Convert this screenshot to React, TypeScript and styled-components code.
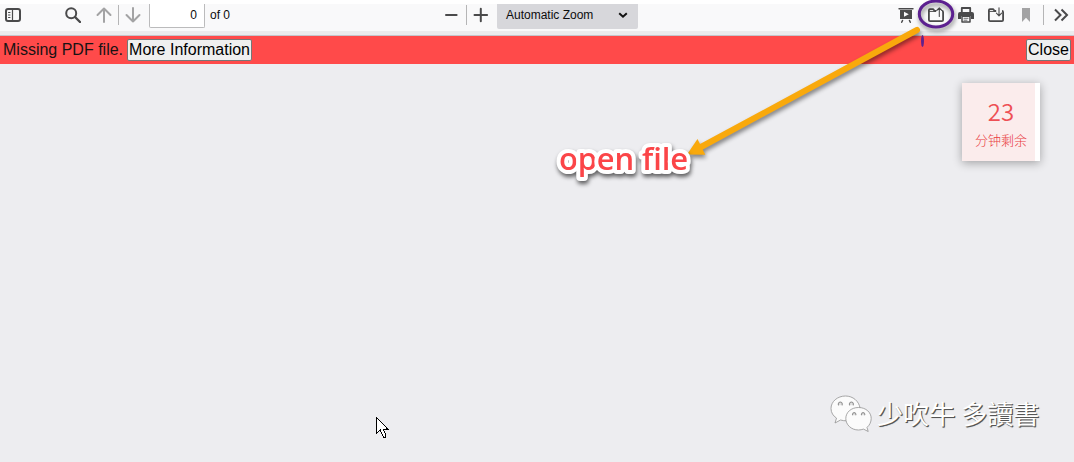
import { ReactNode } from 'react';
import styled, { createGlobalStyle } from 'styled-components';

const GlobalStyle = createGlobalStyle`
  body {
    margin: 0;
    font-family: 'Liberation Sans', Arial, sans-serif;
  }
`;

const Viewer = styled.div`
  position: relative;
  display: flex;
  flex-direction: column;
  width: 1074px;
  height: 462px;
  overflow: hidden;
  background-color: #ededf0;
`;

const Toolbar = styled.header`
  display: flex;
  box-sizing: border-box;
  height: 31px;
  flex-shrink: 0;
  border-top: 4px solid #fff;
  background-color: #f9f9fa;
`;

const ToolbarGroup = styled.div<{ $width: number; $start?: number }>`
  display: flex;
  align-items: flex-start;
  box-sizing: border-box;
  width: ${(props) => props.$width}px;
  padding-left: ${(props) => props.$start ?? 0}px;
`;

const ToolButton = styled.button<{ $width?: number; $gap?: number; $faded?: boolean }>`
  display: flex;
  align-items: center;
  justify-content: center;
  flex-shrink: 0;
  width: ${(props) => props.$width ?? 30}px;
  height: 22px;
  margin: 0 0 0 ${(props) => props.$gap ?? 0}px;
  padding: 0;
  border: none;
  background: none;
  color: ${(props) => (props.$faded ? '#a3a3a4' : '#4a4a4b')};
`;

const Separator = styled.span<{ $gap?: number }>`
  flex-shrink: 0;
  width: 1px;
  height: 20px;
  margin-top: 1px;
  margin-left: ${(props) => props.$gap ?? 0}px;
  background-color: #b5b5b6;
`;

const PageInput = styled.input`
  box-sizing: border-box;
  width: 56px;
  height: 24px;
  margin: 0 0 0 2px;
  padding: 0 7px 2px 0;
  border: 1px solid #bbbbbc;
  border-top: none;
  border-radius: 0 0 2px 2px;
  background-color: #fff;
  color: #0c0c0d;
  font: 12px/20px 'Liberation Sans', Arial, sans-serif;
  text-align: right;
  outline: none;
`;

const PageCount = styled.span`
  margin-left: 5px;
  color: #0c0c0d;
  font-size: 12px;
  line-height: 22px;
`;

const ScaleSelect = styled.button`
  display: flex;
  align-items: center;
  justify-content: space-between;
  box-sizing: border-box;
  width: 141px;
  height: 25px;
  margin: 0 0 0 2px;
  padding: 0 10px 3px 9px;
  border: none;
  border-radius: 0 0 2px 2px;
  background-color: #d7d7db;
  color: #0c0c0d;
  font: 12px 'Liberation Sans', Arial, sans-serif;
`;

const ToolbarEdge = styled.div`
  box-sizing: border-box;
  height: 5px;
  flex-shrink: 0;
  border-bottom: 1px solid #c5c5cb;
  background-color: #ebebed;
`;

const ErrorBar = styled.div`
  display: flex;
  align-items: center;
  justify-content: space-between;
  box-sizing: border-box;
  height: 28px;
  flex-shrink: 0;
  padding: 0 3px;
  background-color: #ff4a4a;
  color: #171314;
  font-size: 16px;
`;

const ErrorMessage = styled.div`
  display: flex;
  align-items: center;
  gap: 4px;
`;

const ErrorButton = styled.button<{ $width: number }>`
  box-sizing: border-box;
  width: ${(props) => props.$width}px;
  height: 22px;
  padding: 0;
  border: 1px solid #767676;
  border-radius: 2px;
  background-color: #efefef;
  color: #000;
  font: 16px/18px 'Liberation Sans', Arial, sans-serif;
  white-space: nowrap;
`;

const Annotations = styled.svg`
  position: absolute;
  inset: 0;
`;

const Shadowed = styled.g`
  filter: drop-shadow(1px 3px 2px rgba(0, 0, 0, 0.45));
`;

const Callout = styled.text`
  fill: #fb4548;
  stroke: #fff;
  stroke-width: 8px;
  stroke-linejoin: round;
  paint-order: stroke fill;
  font: 600 31px 'Open Sans', 'Noto Sans', sans-serif;
  filter: drop-shadow(1px 3px 2px rgba(0, 0, 0, 0.6));
`;

const Timer = styled.div`
  position: absolute;
  left: 962px;
  top: 83px;
  display: flex;
  flex-direction: column;
  align-items: center;
  box-sizing: border-box;
  width: 78px;
  height: 78px;
  padding-top: 10px;
  background: linear-gradient(to right, #fbecec 73px, #fff 73px);
  box-shadow: 0 2px 9px rgba(0, 0, 0, 0.32);
  color: #ee5055;
  font-family: 'Noto Sans CJK SC', sans-serif;
`;

const TimerValue = styled.span`
  font-size: 24px;
  font-weight: 350;
  line-height: 35px;
`;

const TimerLabel = styled.span`
  color: #ea3c42;
  font-size: 13px;
  font-weight: 300;
  line-height: 23px;
`;

const Watermark = styled.div`
  position: absolute;
  left: 829px;
  top: 392px;
  display: flex;
  align-items: center;
  gap: 4px;
  color: #fff;
  font: 400 26.1px/42px 'Noto Sans CJK TC', sans-serif;
  white-space: nowrap;
  text-shadow: 1px 1px 0 #555, 1px 1px 1px #777;
`;

const Cursor = styled.svg`
  position: absolute;
  left: 376px;
  top: 417px;
`;

function Icon({ children }: { children: ReactNode }) {
  return (
    <svg width="16" height="16" viewBox="0 0 16 16" fill="none" stroke="currentColor" strokeWidth="2" strokeLinecap="round" strokeLinejoin="round">
      {children}
    </svg>
  );
}

function FolderOutline() {
  return (
    <>
      <path d="M8.2 4H6.6L5.3 2.2H2Q.9 2.2.9 3.3v9.6q0 1.2 1.2 1.2h11.8q1.2 0 1.2-1.2V5.2Q15.1 4 14 4" strokeWidth="1.8" strokeLinecap="butt" />
      <path d="M1.5 4.4H7" strokeWidth="1" />
    </>
  );
}

function WeChatLogo() {
  return (
    <svg width="44" height="40" viewBox="0 0 44 40" fill="#fbfbfb" stroke="#929292" strokeWidth="0.8">
      <path d="M16.5 3C8.5 3 2 8.5 2 15.5c0 4.2 2.2 7.4 5.5 9.6L6 30l5.5-3c2 .6 4.3.9 6.5.8C28 27 31 22 31 15 30 8.3 24 3 16.5 3Z" />
      <path d="M29.5 14.5c-7.5 0-12.7 5-12.7 11S22 37 29.5 37c1.8 0 3.5-.4 5-.9l4.7 2.4-1.2-4.1c2.6-2.2 4.2-5.4 4.2-9 0-5.9-5.2-10.9-12.7-10.9Z" />
      <path d="M9.7 12.3a2 2 0 1 1 3.2 0M20.8 12.3a2 2 0 1 1 3.2 0M23.8 22.3a1.7 1.7 0 1 1 2.8 0M32.7 22.3a1.7 1.7 0 1 1 2.8 0" fill="#e2e2e2" strokeWidth="1.1" />
    </svg>
  );
}

function App() {
  return (
    <Viewer>
      <GlobalStyle />
      <Toolbar>
        <ToolbarGroup $width={436}>
          <ToolButton $width={26} aria-label="Toggle sidebar">
            <Icon>
              <rect x="1" y="2" width="14" height="12" rx="2" />
              <path d="M7.5 3v10" strokeWidth="1.2" />
              <path d="M3.5 5.5H5M3.5 8H5M3.5 10.5H5" strokeWidth="1" />
            </Icon>
          </ToolButton>
          <ToolButton $gap={32} aria-label="Find">
            <Icon>
              <circle cx="6.2" cy="6.2" r="5" />
              <path d="m10 10 5 5" strokeWidth="2.4" />
            </Icon>
          </ToolButton>
          <ToolButton $gap={1} $faded aria-label="Previous page">
            <Icon>
              <path d="M8 15V1.5M1.5 8 8 1.5 14.5 8" />
            </Icon>
          </ToolButton>
          <Separator $gap={-1} />
          <ToolButton $width={28} $faded aria-label="Next page">
            <Icon>
              <path d="M8 1v13.5M1.5 8 8 14.5 14.5 8" />
            </Icon>
          </ToolButton>
          <PageInput aria-label="Page" defaultValue="0" />
          <PageCount>of 0</PageCount>
        </ToolbarGroup>
        <ToolbarGroup $width={454}>
          <ToolButton aria-label="Zoom out">
            <Icon>
              <path d="M3 8h10.6" />
            </Icon>
          </ToolButton>
          <Separator />
          <ToolButton $width={28} aria-label="Zoom in">
            <Icon>
              <path d="M1.5 8h12.6M7.8 1.7v12.6" />
            </Icon>
          </ToolButton>
          <ScaleSelect>
            Automatic Zoom
            <svg width="10" height="8" viewBox="0 0 10 8" fill="none" stroke="#111" strokeWidth="2">
              <path d="m1.2 2.2 3.8 3.5 3.8-3.5" />
            </svg>
          </ScaleSelect>
        </ToolbarGroup>
        <ToolbarGroup $width={184} $start={1}>
          <ToolButton aria-label="Presentation mode">
            <Icon>
              <path d="M1 1.8h14" strokeWidth="1.4" />
              <path d="M2 3h12v9H2zM6 4.8v5L10.8 7.3z" fill="currentColor" fillRule="evenodd" stroke="none" />
              <path d="m4.5 13.5-.8 1.7M11.5 13.5l.8 1.7" strokeWidth="1.5" />
            </Icon>
          </ToolButton>
          <ToolButton aria-label="Open file">
            <Icon>
              <FolderOutline />
              <path d="M11.3 9.5V.9M8.7 3.5 11.3.9l2.6 2.6" strokeWidth="1.1" />
            </Icon>
          </ToolButton>
          <ToolButton aria-label="Print">
            <Icon>
              <path d="M3.8 5V1h8.4v4" strokeWidth="1.8" />
              <path d="M2 5h12q2 0 2 2v5h-3V9H3v3H0V7q0-2 2-2Z" fill="currentColor" stroke="none" />
              <path d="M4 9.2h8V15H4z" fill="#f9f9fa" strokeWidth="1.5" />
              <path d="M6 11.3h4M6 13.2h3" strokeWidth="0.8" />
            </Icon>
          </ToolButton>
          <ToolButton aria-label="Save">
            <Icon>
              <FolderOutline />
              <path d="M11 .8v8M8.4 6.2 11 8.8l2.6-2.6" strokeWidth="1.1" />
            </Icon>
          </ToolButton>
          <ToolButton $faded aria-label="Current view">
            <Icon>
              <path d="M4 1h8v14l-4-4.2L4 15z" fill="currentColor" stroke="none" />
            </Icon>
          </ToolButton>
          <Separator $gap={2} />
          <ToolButton $gap={2} aria-label="Tools">
            <Icon>
              <path d="m2 2.5 5.5 5.5L2 13.5M8.5 2.5 14 8l-5.5 5.5" strokeLinecap="butt" strokeLinejoin="miter" />
            </Icon>
          </ToolButton>
        </ToolbarGroup>
      </Toolbar>
      <ToolbarEdge />
      <ErrorBar>
        <ErrorMessage>
          <span>Missing PDF file.</span>
          <ErrorButton $width={125}>More Information</ErrorButton>
        </ErrorMessage>
        <ErrorButton $width={45}>Close</ErrorButton>
      </ErrorBar>
      <Timer>
        <TimerValue>23</TimerValue>
        <TimerLabel>分钟剩余</TimerLabel>
      </Timer>
      <Watermark>
        <WeChatLogo />
        <span>少吹牛 多讀書</span>
      </Watermark>
      <Annotations width="1074" height="462" viewBox="0 0 1074 462">
        <Shadowed>
          <ellipse cx="936" cy="14" rx="16.7" ry="13" fill="none" stroke="#5c2090" strokeWidth="3" />
          <path d="M917 30 701 147" stroke="#f9a90c" strokeWidth="6" strokeLinecap="round" />
          <path d="m687 154.5 10.5-15.5 7.8 15.8z" fill="#f9a90c" />
        </Shadowed>
        <ellipse cx="922.5" cy="41" rx="1.5" ry="6" fill="#60218d" />
        <Callout x="559" y="170" textLength="129">
          open file
        </Callout>
      </Annotations>
      <Cursor width="13" height="22" viewBox="0 0 13 22" shapeRendering="crispEdges">
        <path d="M.5.5v16l3.8-3.5 3 7h2.4v-2l-2.5-6h4.5z" fill="#fff" stroke="#000" />
      </Cursor>
    </Viewer>
  );
}

export default App;
